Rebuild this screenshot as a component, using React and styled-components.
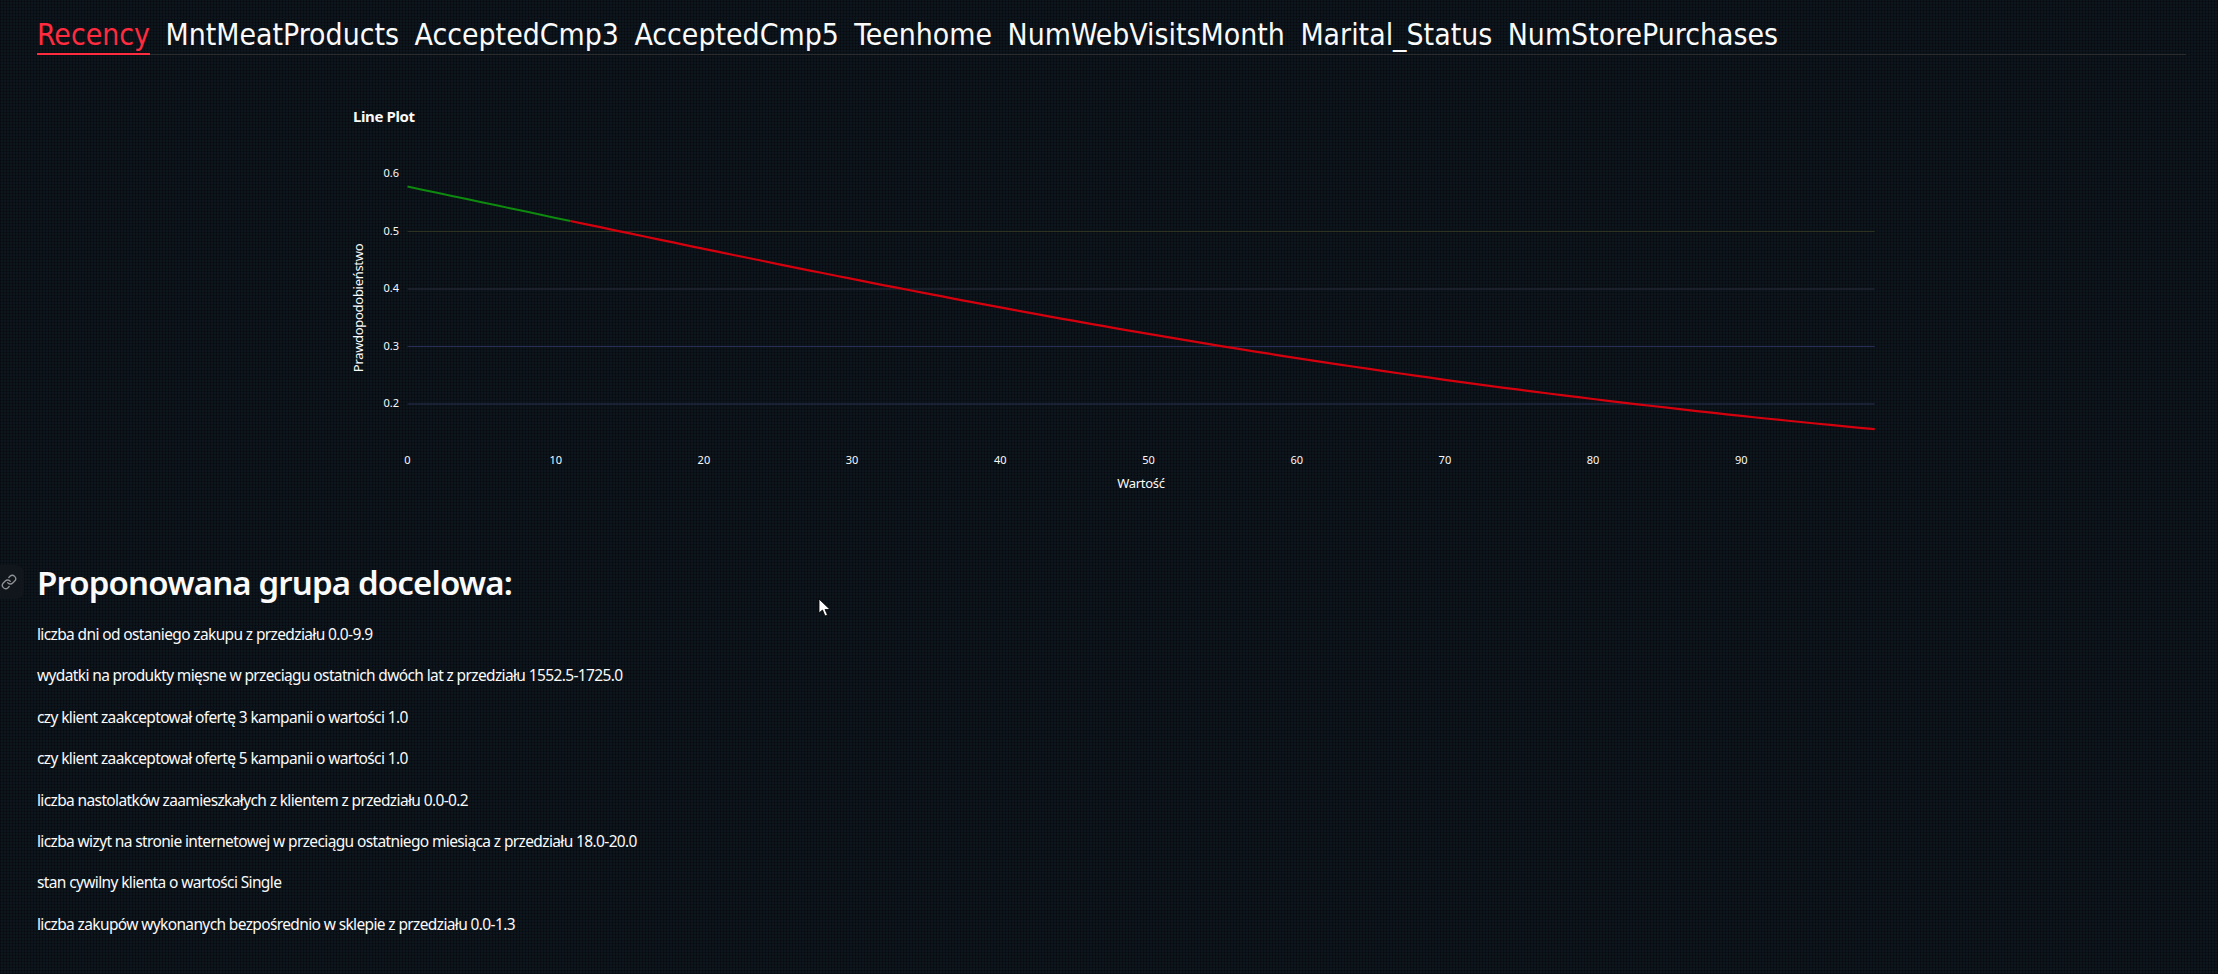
import React from "react";
import styled, { createGlobalStyle } from "styled-components";

const Global = createGlobalStyle`
  html, body { margin: 0; padding: 0; background: #0b1016; }
  body { color: #fafafa; font-family: "Noto Sans", "Open Sans", sans-serif; }
`;

const Page = styled.div`
  position: relative;
  width: 2218px;
  height: 974px;
  box-sizing: border-box;
  padding: 0 32px 0 37px;
  overflow: hidden;
  background-color: #0d151d;
  background-image:
    repeating-linear-gradient(90deg, rgba(0,0,0,0.3) 0 1px, transparent 1px 3px),
    repeating-linear-gradient(0deg, rgba(0,0,0,0.25) 0 1px, transparent 1px 3px);
`;

const TabBar = styled.div`
  display: flex;
  gap: 15.5px;
  height: 54px;
  box-sizing: content-box;
  border-bottom: 1px solid #2a2b2c;
`;

const Tab = styled.div`
  height: 55px;
  box-sizing: border-box;
  padding-top: 15px;
  font-family: "DejaVu Sans", sans-serif;
  font-stretch: condensed;
  font-size: 29.9px;
  line-height: 40px;
  white-space: nowrap;
  color: ${p => (p.$active ? "#ff2b3f" : "#fafafa")};
  border-bottom: ${p => (p.$active ? "2px solid #ff2b3f" : "none")};
`;

const ChartWrap = styled.div`
  margin: 46px 0 0 300px;
  width: 1600px;
  height: 410px;
`;

const Heading = styled.h2`
  position: relative;
  margin: 50px 0 0;
  font-family: "Noto Sans", sans-serif;
  font-size: 33px;
  line-height: 44px;
  font-weight: 600;
  letter-spacing: -0.85px;
  color: #fafafa;
`;

const Anchor = styled.span`
  position: absolute;
  left: -37px;
  top: 4px;
  width: 24px;
  height: 34px;
  padding-left: 1px;
  box-sizing: border-box;
  display: flex;
  align-items: center;
  color: #8f9296;
  background: #11161c;
  border-radius: 0 8px 8px 0;
`;

const List = styled.div`
  display: flex;
  flex-direction: column;
  margin-top: 17px;
`;

const Item = styled.p`
  margin: 0;
  height: 41.4px;
  font-family: "Noto Sans", sans-serif;
  font-size: 15.5px;
  line-height: 25px;
  letter-spacing: -0.63px;
  color: #fafafa;
  white-space: nowrap;
`;

const Cursor = styled.svg`
  position: absolute;
  left: 818px;
  top: 598px;
`;

const tabs = ["Recency","MntMeatProducts","AcceptedCmp3","AcceptedCmp5","Teenhome","NumWebVisitsMonth","Marital_Status","NumStorePurchases"];
const items = [
  "liczba dni od ostaniego zakupu z przedziału 0.0-9.9",
  "wydatki na produkty mięsne w przeciągu ostatnich dwóch lat z przedziału 1552.5-1725.0",
  "czy klient zaakceptował ofertę 3 kampanii o wartości 1.0",
  "czy klient zaakceptował ofertę 5 kampanii o wartości 1.0",
  "liczba nastolatków zaamieszkałych z klientem z przedziału 0.0-0.2",
  "liczba wizyt na stronie internetowej w przeciągu ostatniego miesiąca z przedziału 18.0-20.0",
  "stan cywilny klienta o wartości Single",
  "liczba zakupów wykonanych bezpośrednio w sklepie z przedziału 0.0-1.3",
];

// Chart coordinates: svg origin sits at page (337, 100)
const OX = 337, OY = 100;
const px = v => 407.5 + v * 14.82 - OX;
const py = v => 403 - (v - 0.2) * 575 - OY;

// Smooth curve fitted to the reference, in logit space
const prob = v => 1 / (1 + Math.exp(-(0.315 - 0.0222 * v + 0.00002 * v * v)));
const path = (a, b) => {
  const pts = [];
  for (let v = a; v <= b + 1e-6; v += 1) pts.push(`${px(v).toFixed(1)},${py(prob(v)).toFixed(1)}`);
  return "M" + pts.join("L");
};

const grid = [
  [0.5, "#2d3320"],
  [0.4, "#2a2f3f"],
  [0.3, "#272d55"],
  [0.2, "#2b3054"],
];

const Chart = () => (
  <svg width="1600" height="410" viewBox="0 0 1600 410" fontFamily="Noto Sans, sans-serif" fill="#fafafa">
    <text x="16" y="21" fontSize="15" fontWeight="700" letterSpacing="-0.4">Line Plot</text>
    <text transform="translate(26,207) rotate(-90)" textAnchor="middle" fontSize="13" letterSpacing="-0.3">Prawdopodobieństwo</text>
    <text x="804" y="387" textAnchor="middle" fontSize="13" letterSpacing="-0.3">Wartość</text>
    {grid.map(([v, c]) => (
      <line key={v} x1={px(0)} x2={px(99)} y1={py(v)} y2={py(v)} stroke={c} strokeWidth="1" />
    ))}
    {[0.6, 0.5, 0.4, 0.3, 0.2].map(v => (
      <text key={v} x="62" y={py(v) + 3} textAnchor="end" fontSize="11">{v.toFixed(1)}</text>
    ))}
    {[0,10,20,30,40,50,60,70,80,90].map(v => (
      <text key={v} x={px(v)} y="363" textAnchor="middle" fontSize="11">{v}</text>
    ))}
    <path d={path(0, 11)} fill="none" stroke="#0e8a0e" strokeWidth="2" />
    <path d={path(11, 99)} fill="none" stroke="#d4000e" strokeWidth="2.2" />
  </svg>
);

const LinkIcon = () => (
  <svg width="16" height="16" viewBox="0 0 24 24" fill="none" stroke="currentColor" strokeWidth="2" strokeLinecap="round" strokeLinejoin="round">
    <path d="M10 13a5 5 0 0 0 7.54.54l3-3a5 5 0 0 0-7.07-7.07l-1.72 1.71" />
    <path d="M14 11a5 5 0 0 0-7.54-.54l-3 3a5 5 0 0 0 7.07 7.07l1.71-1.71" />
  </svg>
);

export default function App() {
  return (
    <Page>
      <Global />
      <TabBar>
        {tabs.map((t, i) => <Tab key={t} $active={i === 0}>{t}</Tab>)}
      </TabBar>
      <ChartWrap><Chart /></ChartWrap>
      <Heading><Anchor><LinkIcon /></Anchor>Proponowana grupa docelowa:</Heading>
      <List>{items.map(t => <Item key={t}>{t}</Item>)}</List>
      <Cursor width="14" height="20" viewBox="0 0 14 20">
        <path d="M1 1 L1 15 L4.5 12 L7 18 L9.5 17 L7 11.5 L12 11.5 Z" fill="#fff" stroke="#000" strokeWidth="0.8" />
      </Cursor>
    </Page>
  );
}
